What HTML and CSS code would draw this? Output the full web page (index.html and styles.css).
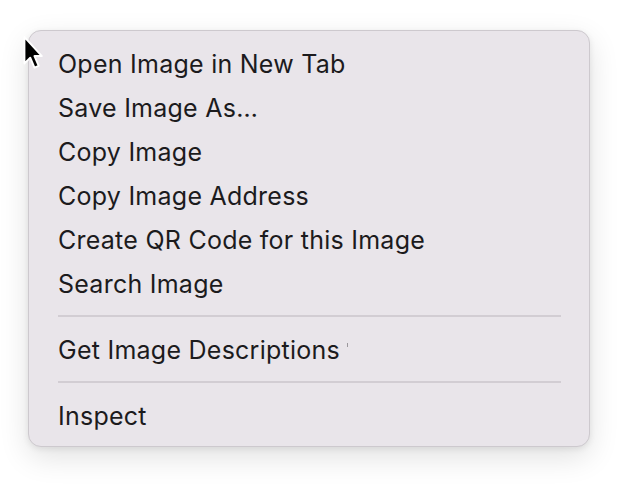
FILE: index.html
```html
<!DOCTYPE html>
<html lang="en">
<head>
    <meta charset="UTF-8">
    <meta name="viewport" content="width=device-width, initial-scale=1.0">
    <title>Context Menu</title>
    <link rel="stylesheet" href="styles.css">
</head>
<body>
    <div class="menu">
        <div class="item">Open Image in New Tab</div>
        <div class="item">Save Image As…</div>
        <div class="item">Copy Image</div>
        <div class="item">Copy Image Address</div>
        <div class="item">Create QR Code for this Image</div>
        <div class="item">Search Image</div>
        <div class="separator"></div>
        <div class="item">Get Image Descriptions <span class="tick"></span></div>
        <div class="separator"></div>
        <div class="item">Inspect</div>
    </div>
    <svg class="cursor" width="26" height="38" viewBox="0 0 24 36">
        <path d="M2 1 L2 26 L7.5 20.5 L11.5 30 L15.5 28.2 L11.5 19 L18.5 19 Z" fill="#000" stroke="#fff" stroke-width="1.8" stroke-linejoin="round"/>
    </svg>
</body>
</html>
```

FILE: styles.css
```css
body {
    margin: 0;
    padding: 30px 0 0 28px;
    background: #ffffff;
    font-family: Inter, "Noto Sans", sans-serif;
    width: 617px;
    height: 486px;
    box-sizing: border-box;
    overflow: hidden;
}
.menu {
    width: 562px;
    height: 417px;
    box-sizing: border-box;
    padding: 11px 28px 0 29px;
    background: #e9e5ea;
    border: 1px solid #cdc9ce;
    border-radius: 13px;
    box-shadow: 0 10px 30px rgba(0, 0, 0, 0.12), 0 2px 6px rgba(0, 0, 0, 0.08);
}
.item {
    height: 44px;
    line-height: 44px;
    font-size: 25px;
    color: #1c1b1d;
    letter-spacing: 0.25px;
    white-space: nowrap;
}
.separator {
    height: 2px;
    background: #d2cdd3;
    margin: 9px 0 11px 0;
}
.tick {
    display: inline-block;
    width: 1px;
    height: 4px;
    background: #9b979c;
    vertical-align: 12px;
}
.cursor {
    position: absolute;
    left: 22px;
    top: 36px;
}
```
